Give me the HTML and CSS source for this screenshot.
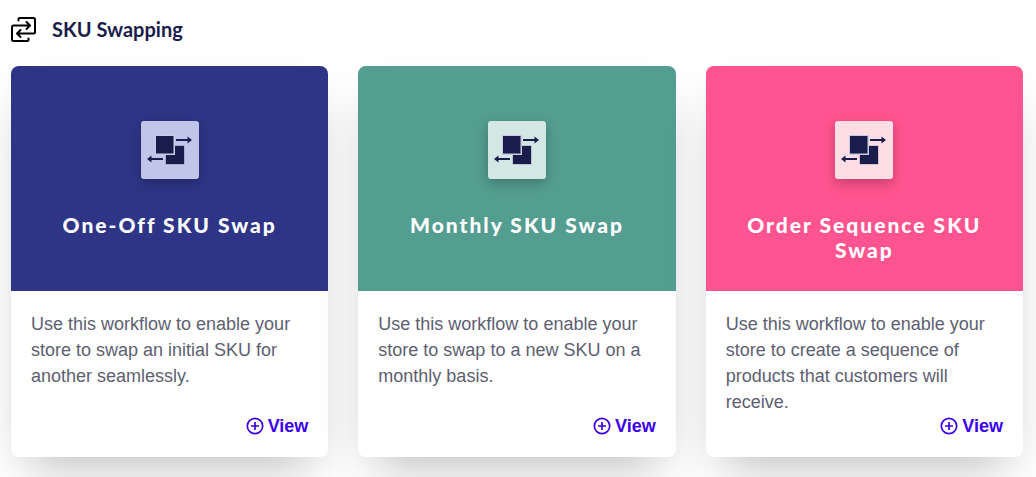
FILE: index.html
```html
<!DOCTYPE html>
<html lang="en">
<head>
    <meta charset="UTF-8">
    <meta name="viewport" content="width=device-width, initial-scale=1.0">
    <title>SKU Swapping</title>
    <link rel="stylesheet" href="styles.css">
</head>
<body>
    <svg class="sprite" aria-hidden="true">
      <symbol id="swapIcon" viewBox="0 0 58 58">
        <rect x="25" y="25" width="18" height="18" fill="#1a1c4b" stroke="#1a1c4b" stroke-opacity=".3"/>
        <rect x="14" y="14" width="20" height="20" fill="#c9cbe0"/>
        <rect x="15" y="15" width="17.500" height="17.500" fill="#1a1c4b"/>
        <path d="M35 19H47M22 38H9" stroke="#1a1c4b" stroke-width="2"/>
        <path d="M46.500 15.500L51 19L46.500 22.500ZM10.500 34.500L6 38L10.500 41.500Z" fill="#1a1c4b"/>
      </symbol>
      <symbol id="plusIcon" viewBox="0 0 18 18">
        <path d="M9 5V13M5 9H13" fill="none" stroke="currentColor" stroke-width="1.700"/>
        <circle cx="9" cy="9" r="7.700" fill="none" stroke="currentColor" stroke-width="1.700"/>
      </symbol>
    </svg>

    <main class="section">
      <div class="section-header">
        <svg class="section-icon" viewBox="0 0 25 25" aria-hidden="true">
          <path d="M7.500 3.500V2Q7.500 1 8.500 1H22.500Q24 1 24 2.500V15Q24 16.500 22.500 16.500H6.500M17.500 21.500V23Q17.500 24 16.500 24H2.500Q1 24 1 22.500V10Q1 8.500 2.500 8.500H18.500M15.500 5L19 8.500L15.500 12M9.500 13L6 16.500L9.500 20"/>
        </svg>
        <h1>SKU Swapping</h1>
      </div>

      <div class="cards">
        <article class="card">
          <div class="card-top blue">
            <svg class="card-icon"><use href="#swapIcon"/></svg>
            <h2>One-Off SKU Swap</h2>
          </div>
          <div class="card-body">
            <p>Use this workflow to enable your store to swap an initial SKU for another seamlessly.</p>
            <a class="view" href="#one-off"><svg><use href="#plusIcon"/></svg>View</a>
          </div>
        </article>

        <article class="card">
          <div class="card-top green">
            <svg class="card-icon"><use href="#swapIcon"/></svg>
            <h2>Monthly SKU Swap</h2>
          </div>
          <div class="card-body">
            <p>Use this workflow to enable your store to swap to a new SKU on a monthly basis.</p>
            <a class="view" href="#monthly"><svg><use href="#plusIcon"/></svg>View</a>
          </div>
        </article>

        <article class="card">
          <div class="card-top pink">
            <svg class="card-icon"><use href="#swapIcon"/></svg>
            <h2>Order Sequence SKU Swap</h2>
          </div>
          <div class="card-body">
            <p>Use this workflow to enable your store to create a sequence of products that customers will receive.</p>
            <a class="view" href="#sequence"><svg><use href="#plusIcon"/></svg>View</a>
          </div>
        </article>
      </div>
    </main>
</body>
</html>
```
FILE: styles.css
```css
* {
  box-sizing: border-box;
}

body {
  margin: 0;
  background-color: #fff;
  font-family: "Liberation Sans", Arial, sans-serif;
  font-size: 18px;
}

h1,
h2,
p {
  margin: 0;
}

.sprite {
  display: none;
}

.section {
  padding: 16px 13px 20px 11px;
}

.section-header {
  display: flex;
  align-items: center;
  gap: 16px;
  margin-bottom: 24px;
}

.section-header h1 {
  font-family: Lato, sans-serif;
  font-size: 20px;
  line-height: 26px;
  font-weight: 700;
  color: #1a1c4b;
}

.section-icon {
  width: 25px;
  height: 25px;
  fill: none;
  stroke: #000;
  stroke-width: 2;
  stroke-linecap: round;
  stroke-linejoin: round;
}

.cards {
  display: grid;
  grid-template-columns: repeat(3, 1fr);
  gap: 30px;
}

.card {
  display: flex;
  flex-direction: column;
  border-radius: 8px;
  background-color: #fff;
  overflow: hidden;
  box-shadow: 0 24px 48px -16px rgba(0, 0, 0, 0.27);
}

.card-top {
  display: flex;
  flex-direction: column;
  align-items: center;
  gap: 33px;
  min-height: 225px;
  padding: 55px 30px 29px;
}

.card-top h2 {
  font-family: Lato, sans-serif;
  font-size: 21px;
  line-height: 25px;
  font-weight: 900;
  letter-spacing: 2px;
  text-align: center;
  color: #fff;
}

.card-icon {
  width: 58px;
  height: 58px;
  border-radius: 3px;
  box-shadow: 0 4px 12px rgba(0, 0, 0, 0.25);
}

.blue {
  background-color: #2e3586;
}

.blue .card-icon {
  background-color: #c2c5ea;
}

.green {
  background-color: #549d91;
}

.green .card-icon {
  background-color: #d3e7e4;
}

.pink {
  background-color: #ff548f;
}

.pink .card-icon {
  background-color: #ffdde4;
}

.card-body {
  display: flex;
  flex-direction: column;
  flex: 1;
  padding: 20px;
}

.card-body p {
  line-height: 26px;
  color: #5d6071;
}

.view {
  display: flex;
  align-items: center;
  align-self: flex-end;
  gap: 4px;
  margin-top: auto;
  line-height: 22px;
  font-weight: 700;
  color: #3b00ed;
  text-decoration: none;
}

.view svg {
  width: 18px;
  height: 18px;
}
```
